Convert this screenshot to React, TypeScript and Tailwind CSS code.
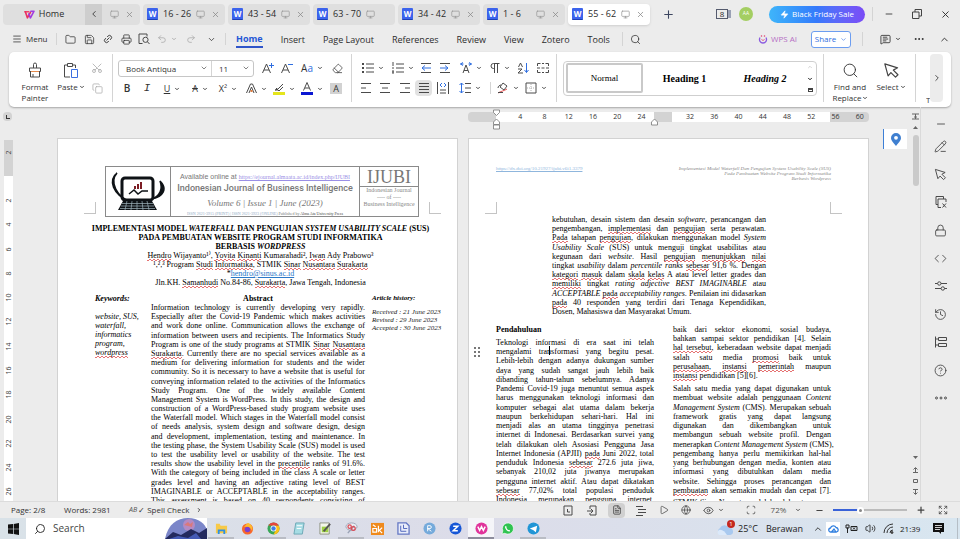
import React from "react";
import {
  ChevronDown, ChevronLeft, ChevronRight, ChevronUp, CircleHelp, Code, Copy, Ellipsis,
  Eraser, Eye, Folder, Globe, History, Lock, Menu, MessageSquareText, Minus, Monitor, PencilLine,
  Play, Plus, Printer, Redo2, Save, Scissors, Search, Undo2, X, Zap,
  Scan, Volume2, FileText, CopyX, Link2, Expand,
} from "lucide-react";

type Kids = { children?: React.ReactNode };

/* Inline markup: *italic* and ~flagged by the spell checker~ */
function Rich({ text }: { text: string }) {
  return (
    <>
      {text.split(/(\*[^*]+\*|~[^~]+~)/).map((part, i) => {
        if (part.startsWith("*")) return <em key={i}>{part.slice(1, -1)}</em>;
        if (part.startsWith("~"))
          return (
            <span
              key={i}
              className="bg-[linear-gradient(90deg,#e57373_50%,transparent_50%),linear-gradient(90deg,transparent_50%,#e57373_50%)] bg-[length:4px_1px] bg-[position:0_100%,0_calc(100%_-_1px)] bg-repeat-x pb-px"
            >
              {part.slice(1, -1)}
            </span>
          );
        return <React.Fragment key={i}>{part}</React.Fragment>;
      })}
    </>
  );
}

function Lines({ lines, className, ragged }: { lines: string[]; className: string; ragged?: boolean }) {
  return (
    <div className={"flex flex-col justify-between " + className}>
      {lines.map((line, i) => (
        <p
          key={i}
          className={
            ragged && i === lines.length - 1
              ? "whitespace-nowrap"
              : "whitespace-nowrap text-justify [text-align-last:justify]"
          }
        >
          <Rich text={line} />
        </p>
      ))}
    </div>
  );
}

const abstractLines = [
  "Information technology is currently developing very rapidly.",
  "Especially after the Covid-19 Pandemic which makes activities",
  "and work done online. Communication allows the exchange of",
  "information between users and recipients. The Informatics Study",
  "Program is one of the study programs at STMIK ~Sinar~ ~Nusantara~",
  "~Surakarta~. Currently there are no special services available as a",
  "medium for delivering information for students and the wider",
  "community. So it is necessary to have a website that is useful for",
  "conveying information related to the activities of the Informatics",
  "Study Program. One of the widely available Content",
  "Management System is WordPress. In this study, the design and",
  "construction of a WordPress-based study program website uses",
  "the Waterfall model. Which stages in the Waterfall model consist",
  "of needs analysis, system design and software design, design",
  "and development, implementation, testing and maintenance. In",
  "the testing phase, the System Usability Scale (SUS) model is used",
  "to test the usability level or usability of the website. The test",
  "results show the usability level in the ~precentile~ ranks of 91.6%.",
  "With the category of being included in the class A scale or letter",
  "grades level and having an adjective rating level of BEST",
  "IMAGINABLE or ACCEPTABLE in the acceptability ranges.",
  "This assessment is based on 40 respondents consisting of",
];

const abstrakLines = [
  "kebutuhan, desain sistem dan desain *software*, perancangan dan",
  "pengembangan, ~implementasi~ dan ~pengujian~ serta perawatan.",
  "~Pada~ tahapan ~pengujian~, dilakukan menggunakan model *System*",
  "*Usability Scale* (SUS) untuk menguji tingkat usabilitas atau",
  "kegunaan dari *website*. Hasil ~pengujian~ ~menunjukkan~ ~nilai~",
  "tingkat *usability* dalam *percentile ranks* ~sebesar~ 91,6 %. Dengan",
  "~kategori~ ~masuk~ dalam ~skala~ ~kelas~ A atau level letter grades dan",
  "~memiliki~ tingkat *rating adjective BEST IMAGINABLE* atau",
  "*ACCEPTABLE* ~pada~ *acceptability ranges*. Penilaian ini didasarkan",
  "~pada~ 40 responden yang terdiri dari Tenaga Kependidikan,",
  "Dosen, Mahasiswa dan Masyarakat Umum.",
];

const introLines = [
  "Teknologi informasi di era saat ini telah",
  "mengalami transformasi yang begitu pesat.",
  "Lebih-lebih dengan adanya dukungan sumber",
  "daya yang sudah sangat jauh lebih baik",
  "dibanding tahun-tahun sebelumnya. Adanya",
  "Pandemi Covid-19 juga menuntut semua aspek",
  "harus menggunakan teknologi informasi dan",
  "komputer sebagai alat utama dalam bekerja",
  "maupun berkehidupan sehari-hari. Hal ini",
  "menjadi alas an utama tingginya penetrasi",
  "internet di Indonesai. Berdasarkan survei yang",
  "telah dilakukan oleh Asosiasi Pengguna Jasa",
  "Internet Indonesia (APJII) ~pada~ Juni 2022, total",
  "penduduk Indonesia ~sebesar~ 272.6 juta jiwa,",
  "sebanyak 210,02 juta jiwanya merupakan",
  "pengguna internet aktif. Atau dapat dikatakan",
  "~sebesar~ 77,02% total populasi penduduk",
  "Indonesia merupakan pengguna internet.",
];

const sectorLines = [
  "baik dari sektor ekonomi, sosial budaya,",
  "bahkan sampai sektor pendidikan [4]. Selain",
  "~hal tersebut~, keberadaan website dapat menjadi",
  "salah satu media ~promosi~ baik untuk",
  "~perusahaan~, ~instansi~ ~pemerintah~ maupun",
  "~instansi~ pendidikan [5][6].",
];

const cmsLines = [
  "Salah satu media yang dapat digunakan untuk",
  "membuat website adalah penggunaan *Content*",
  "*Management System* (CMS). Merupakan sebuah",
  "framework gratis yang dapat langsung",
  "digunakan dan dikembangkan untuk",
  "membangun sebuah website profil. Dengan",
  "menerapkan *Content Management System* (CMS),",
  "pengembang hanya perlu memikirkan hal-hal",
  "yang berhubungan dengan media, konten atau",
  "informasi yang dibutuhkan dalam media",
  "website. Sehingga proses perancangan dan",
  "~pembuatan~ akan semakin mudah dan cepat [7].",
];

/* ---------- small shared pieces ---------- */

const ic = { size: 11, strokeWidth: 1.6 };

function Divider({ className = "h-3" }: { className?: string }) {
  return <span className={"w-px shrink-0 bg-[#d4d4d4] " + className} />;
}

function Tool({ label, className, drop, children }: Kids & { label: string; className: string; drop?: boolean }) {
  return (
    <button aria-label={label} className={"flex h-4 shrink-0 items-center justify-center gap-1 " + className}>
      {children}
      {drop && <ChevronDown size={6} strokeWidth={3.5} className="shrink-0" />}
    </button>
  );
}

function Art({ w = 12, h = 12, children }: Kids & { w?: number; h?: number }) {
  return (
    <svg width={w} height={h} viewBox={`0 0 ${w} ${h}`} fill="none" stroke="#4a4a4a" strokeWidth="1" className="shrink-0">
      {children}
    </svg>
  );
}

function Pointer({ size }: { size: number }) {
  return (
    <svg width={size} height={size} viewBox="0 0 14 14" fill="none" stroke="#444" strokeWidth="1" strokeLinejoin="round">
      <path d="M1.500 1.500l2.700 10 2.300-2.800 3.800 3.800 2-2-3.800-3.800 3.500-1.900z" />
    </svg>
  );
}

function WpsMark({ size = 11 }: { size?: number }) {
  return (
    <svg width={size} height={size} viewBox="0 0 12 12" fill="none" strokeWidth="1.8" strokeLinejoin="round" strokeLinecap="round">
      <path d="M1 3h4.200" stroke="#f0436a" />
      <path d="M1.500 3l2.200 6.600L7 3.600" stroke="#e9315f" />
      <path d="M5.200 5.500l1.800 4.100L10.800 2.500H7.500" stroke="#a23be0" />
    </svg>
  );
}

function Tab({ title, active, noClose }: { title: string; active?: boolean; noClose?: boolean }) {
  return (
    <button
      className={
        "flex h-[21px] w-[82px] shrink-0 items-center rounded pl-1 pr-[5px] text-[9px] " +
        (active ? "bg-white shadow-sm" : "bg-[#dfdfdf]")
      }
    >
      <span className="flex h-3 w-[11px] items-center justify-center rounded-[1px] border-b border-[#1c3fb5] bg-[#3c63ec] text-[8px] font-bold leading-none text-white">
        W
      </span>
      <span className="ml-[5px] flex-1 text-left">{title}</span>
      <Monitor size={9} strokeWidth={2} className="text-[#999]" />
      <span className="ml-[6px] w-[9px]">{!noClose && <X size={9} strokeWidth={2} className="text-[#888]" />}</span>
    </button>
  );
}

/* ---------- window chrome ---------- */

function TabBar() {
  return (
    <header className="flex h-7 shrink-0 items-center gap-[3px] pl-[3px]">
      <div className="flex h-[21px] w-[137px] shrink-0 items-center overflow-hidden rounded bg-[#dfdfdf] text-[9px]">
        <button className="flex w-[82px] items-center justify-center gap-1">
          <WpsMark />
          Home
        </button>
        <button aria-label="Scroll tabs left" className="flex h-full w-[17px] items-center justify-center bg-[#cecece]">
          <ChevronLeft size={10} strokeWidth={2} />
        </button>
        <Monitor size={9} strokeWidth={2} className="ml-2 text-[#999]" />
        <X size={9} strokeWidth={2} className="ml-[6px] text-[#888]" />
      </div>
      <Tab title="16 - 26" />
      <Tab title="43 - 54" />
      <Tab title="63 - 70" noClose />
      <Tab title="34 - 42" />
      <Tab title="1 - 6" />
      <Tab title="55 - 62" active />
      <button aria-label="New tab" className="ml-[9px]">
        <Plus size={13} strokeWidth={2} className="text-[#3d4660]" />
      </button>
      <div className="flex flex-1 items-center justify-end">
        <span className="flex h-[10px] w-3 items-center justify-center border border-[#555b6e] text-[8px] leading-none">8</span>
        <span className="mr-2 h-2 w-[3px] bg-[#9aa1b5]" />
        <span className="mr-4 flex h-[14px] w-[14px] items-center justify-center rounded-full bg-[#a4ce62] text-[5px] text-white">AA</span>
        <button className="flex h-[17px] w-24 items-center justify-center gap-[3px] rounded-full bg-gradient-to-r from-[#3fb5fa] via-[#3579fb] to-[#7a4bf6] text-[8px] text-white">
          <Zap size={9} fill="white" strokeWidth={1} />
          Black Friday Sale
        </button>
        <Divider className="ml-[7px] h-[14px]" />
        <button aria-label="Minimize" className="ml-[11px]"><Minus size={10} strokeWidth={2} /></button>
        <button aria-label="Restore" className="ml-[18px]">
          <Art w={10} h={10}><path d="M.5 3h6.500v6.500H.5zM3 3V.5h6.500V7H7" stroke="#444" /></Art>
        </button>
        <button aria-label="Close" className="ml-[18px] mr-[9px]"><X size={11} strokeWidth={2} /></button>
      </div>
    </header>
  );
}

function MenuRow() {
  return (
    <nav className="flex h-[24px] shrink-0 items-center pb-[2px] pl-3 text-[9px]">
      <button className="flex w-11 items-center gap-1 text-[8px]"><Menu size={10} strokeWidth={1.8} />Menu</button>
      <Divider />
      <div className="ml-1 flex items-center">
        <Tool label="Open" className="w-[19px]"><Folder {...ic} /></Tool>
        <Tool label="Save" className="w-[18px]"><Save {...ic} /></Tool>
        <Tool label="Link" className="w-[19px]"><Link2 size={10} strokeWidth={2} className="-rotate-45" /></Tool>
        <Tool label="Print" className="w-[18px]"><Printer {...ic} /></Tool>
        <Tool label="Print preview" className="w-[18px]"><Art><path d="M4.500 10.500H1V1h8v2.500" /><circle cx="7.500" cy="6.800" r="2.600" /><path d="M9.500 8.800l2 2.200" /></Art></Tool>
        <Tool label="Undo" className="w-[28px] text-[#a8a8a8]" drop><Undo2 size={10} strokeWidth={1.8} /></Tool>
        <Tool label="Redo" className="w-[20px] text-[#a8a8a8]"><Redo2 size={10} strokeWidth={1.8} /></Tool>
        <Tool label="More" className="w-[20px]"><ChevronDown size={9} strokeWidth={2} /></Tool>
      </div>
      <Divider className="ml-1 h-3" />
      <div className="ml-[10px] flex items-center gap-[18px] pt-[2px]">
        <button className="border-b-2 border-[#2f55c9] font-bold text-[#2457d6]">Home</button>
        <button>Insert</button>
        <button>Page Layout</button>
        <button>References</button>
        <button>Review</button>
        <button>View</button>
        <button>Zotero</button>
        <button>Tools</button>
      </div>
      <Divider className="ml-[12px] h-[14px]" />
      <button aria-label="Search" className="ml-[7px]"><Search size={11} strokeWidth={1.6} /></button>
      <div className="flex flex-1 items-center justify-end">
        <button className="flex items-center gap-[3px] text-[8px] text-[#b66fc4]">
          <Art w={10} h={10}>
            <path d="M2 3.500C.5 6.500 2.500 9 5 9s4.500-2.500 3-5.500" stroke="#8b5be0" strokeWidth="1.300" />
            <path d="M3.500 5.500c.8 1 2.200 1 3 0" stroke="#e2557f" />
            <path d="M3 1.500l1 1M7 1.500l-1 1" stroke="#e2557f" strokeWidth="1.300" />
          </Art>
          WPS AI
        </button>
        <button className="ml-[14px] flex h-[17px] w-10 items-center justify-center gap-1 rounded-[3px] border border-[#6c9df0] bg-white text-[8px] text-[#2f6ee0]">
          Share<ChevronDown size={7} strokeWidth={2} />
        </button>
        <Divider className="mx-[11px] h-[14px]" />
        <Tool label="Comments" className="w-8" drop><MessageSquareText size={11} strokeWidth={1.8} /></Tool>
        <Tool label="More options" className="w-[26px]"><Ellipsis size={12} strokeWidth={2} /></Tool>
        <Tool label="Collapse ribbon" className="mr-1 w-6"><ChevronUp size={11} strokeWidth={2} /></Tool>
      </div>
    </nav>
  );
}

/* Stacked strokes used by the list and alignment tools */
function Bars({ rows }: { rows: [number, number][] }) {
  return (
    <Art>
      {rows.map(([a, b], i) => (
        <path key={i} d={`M${a} ${(i * 9) / (rows.length - 1) + 1.5}H${b}`} />
      ))}
    </Art>
  );
}

function Ribbon() {
  return (
    <section className="mx-[9px] flex h-[55px] shrink-0 items-center overflow-hidden rounded-[5px] bg-white pb-[3px] text-[8px] leading-[11px] text-[#333] shadow-[0_1px_2px_rgba(0,0,0,0.3)]">
      <button className="ml-[6px] flex h-[50px] w-10 flex-col items-center gap-[2px] pt-[9px]">
        <svg width="16" height="17" viewBox="0 0 16 17" fill="none" stroke="#4a4a4a" className="shrink-0">
          <path d="M6.500 6V2.500a1.500 1.500 0 013 0V6M2.500 6h11v3.500h-11zM3.500 9.500v5.500h9V9.500M6 12v3" />
          <path d="M4 9.500h8" stroke="#e58a4c" />
        </svg>
        <span>Format</span>
        <span className="-mt-[2px]">Painter</span>
      </button>
      <button className="flex h-[50px] w-8 flex-col items-center gap-[2px] pt-[9px]">
        <svg width="16" height="17" viewBox="0 0 16 17" fill="none" stroke="#4a4a4a" className="shrink-0">
          <path d="M7 15H1.500V3h3M9.500 3h3v3M4.500 1.500h5v3h-5z" />
          <path d="M8.500 7.500h6v8h-6z" stroke="#3b6fe0" />
        </svg>
        <span className="flex items-center gap-px">Paste<ChevronDown size={6} strokeWidth={3.5} /></span>
      </button>
      <div className="flex w-5 flex-col items-center gap-1 text-[#aaa]">
        <Tool label="Cut" className="w-4"><Scissors size={12} strokeWidth={1.6} className="-rotate-90" /></Tool>
        <Tool label="Copy" className="w-4"><Copy size={11} strokeWidth={1.6} /></Tool>
      </div>
      <Divider className="mx-[5px] h-[48px]" />
      <div className="flex flex-col gap-1">
        <div className="flex items-center">
          <div className="mr-1 flex h-[17px] w-[136px] items-center rounded-[3px] border border-[#c6c6c6]">
            <label className="relative flex w-[92px] items-center">
              <select aria-label="Font" className="w-full appearance-none bg-transparent pl-[7px]"><option>Book Antiqua</option></select>
              <ChevronDown size={8} strokeWidth={1.8} className="absolute right-[3px]" />
            </label>
            <Divider className="h-full" />
            <label className="relative flex flex-1 items-center">
              <select aria-label="Font size" className="w-full appearance-none bg-transparent pl-[7px]"><option>11</option></select>
              <ChevronDown size={8} strokeWidth={1.8} className="absolute right-[3px]" />
            </label>
          </div>
          <Tool label="Increase font size" className="w-[20px]"><Art><path d="M.5 11L4.500 2l4 9M2 8h5" /><path d="M9.500 1v5M7 3.500h5" stroke="#2f6ee0" /></Art></Tool>
          <Tool label="Decrease font size" className="w-[18px]"><Art><path d="M.5 11L4.500 2l4 9M2 8h5" /><path d="M7 2.500h5" stroke="#2f6ee0" /></Art></Tool>
          <Tool label="Change case" className="w-[32px] text-[10px]" drop><span>A<span className="text-[#2f6ee0]">a</span></span></Tool>
          <Tool label="Clear format" className="w-[18px]"><Eraser {...ic} /></Tool>
        </div>
        <div className="flex items-center">
          <Tool label="Bold" className="w-[18px] text-[10px] font-semibold">B</Tool>
          <Tool label="Italic" className="w-[22px] font-['Liberation_Mono',monospace] text-[11px] italic">I</Tool>
          <Tool label="Underline" className="w-7 text-[9px]" drop><span className="underline">U</span></Tool>
          <Tool label="Strikethrough" className="w-7 text-[9px]" drop><span className="line-through">A</span></Tool>
          <Tool label="Superscript" className="w-7 text-[9px]" drop>X²</Tool>
          <Tool label="Text effects" className="w-7" drop>
            <Art w={11} h={11}><path d="M.5 10L4.500 1h2l4 9M3 10l2.500-6L8 10" /><path d="M4.500 8h2" stroke="#e07b3c" strokeWidth="2" /></Art>
          </Tool>
          <Tool label="Highlight" className="w-7" drop>
            <Art w={12} h={13}><path d="M2 8l3-1 5-5M3 6l3 3 4-4M2 8h3" /><path d="M0 11.500h12" stroke="#e5e51c" strokeWidth="3" /></Art>
          </Tool>
          <Tool label="Font colour" className="w-7" drop>
            <Art w={12} h={13}><path d="M2.500 8.500L6 .5l3.500 8M4 6h4" /><path d="M0 11.500h12" stroke="#0b17d2" strokeWidth="3" /></Art>
          </Tool>
          <Tool label="Shading" className="ml-1 w-3 text-[9px]"><span className="bg-[#d2d2d2] px-[3px]">A</span></Tool>
        </div>
      </div>
      <Divider className="mx-[5px] h-[48px]" />
      <div className="flex flex-col gap-1">
        <div className="flex items-center">
          <Tool label="Bullets" className="w-[32px]" drop><Art><path d="M0 2h2M0 6h2M0 10h2" strokeWidth="2" /><path d="M4 2h8M4 6h8M4 10h8" /></Art></Tool>
          <Tool label="Numbering" className="w-[28px]" drop><Art><path d="M1 0v4M0 6h2M0 10h2M1 8v4" /><path d="M4 2h8M4 6h8M4 10h8" /></Art></Tool>
          <Tool label="Decrease indent" className="w-[18px]"><Art><path d="M1 1.500h10M1 10.500h10" /><path d="M11 6H2M5 3.500L2 6l3 2.500" stroke="#2f6ee0" /></Art></Tool>
          <Tool label="Increase indent" className="w-[20px]"><Art><path d="M1 1.500h10M1 10.500h10" /><path d="M1 6h8M6 3.500L9 6 6 8.500" stroke="#2f6ee0" /></Art></Tool>
          <Tool label="Character scaling" className="w-[32px]" drop><Art><path d="M3 11l3-8 3 8M4 8.500h4" /><path d="M3 .5L.5 2 3 3.500M9 .5L11.500 2 9 3.500M.5 2h3M8.500 2h3" stroke="#2f6ee0" /></Art></Tool>
          <Tool label="Paragraph marks" className="w-[26px]" drop><Art w={10}><path d="M4.500 11V1.500M7.500 11V1.500M9.500 1.500H3.500a2.500 2.500 0 000 5h1" /></Art></Tool>
          <Tool label="Sort" className="w-[20px]"><Art><path d="M1.500 5l2-4 2 4M1 7h4L1 11h5" /><path d="M9.500 1v9.500M7.500 8l2 2.500 2-2.500" stroke="#2f6ee0" /></Art></Tool>
          <Tool label="Tabs" className="w-[20px]"><Art><path d="M.5 4V1.500h3M5 1.500h2M8.500 1.500h3V4M.5 8v2.500h3M5 10.500h2M8.500 10.500h3V8M0 6h3M4.500 6h3M9 6h3" /></Art></Tool>
        </div>
        <div className="flex items-center">
          <Tool label="Align left" className="w-[18px]"><Bars rows={[[1, 11], [1, 6], [1, 11]]} /></Tool>
          <Tool label="Align centre" className="w-[20px]"><Bars rows={[[1, 11], [3, 9], [1, 11]]} /></Tool>
          <Tool label="Align right" className="w-[20px]"><Bars rows={[[1, 11], [6, 11], [1, 11]]} /></Tool>
          <Tool label="Justify" className="w-[17px] rounded-sm bg-[#e2e2e2]"><Bars rows={[[1, 11], [1, 11], [1, 11], [1, 11]]} /></Tool>
          <Tool label="Distribute" className="ml-px w-[20px]"><Art><path d="M.5 0v12M11.500 0v12M3 8h6M3 11h6" /><path d="M5 1L3 3l2 2M7 1l2 2-2 2" stroke="#2f6ee0" /></Art></Tool>
          <Tool label="Line spacing" className="w-[34px]" drop><Art><path d="M6 1.500h6M6 6h6M6 10.500h6" /><path d="M2.500 1v10M.5 3l2-2 2 2M.5 9l2 2 2-2" stroke="#2f6ee0" /></Art></Tool>
          <Divider className="mx-[3px] h-3" />
          <Tool label="Fill" className="w-[28px]" drop><Art><path d="M3 5l3-4 4 3-3 4zM1 6c0-2 2-3 3-3" /><path d="M1 11c3-2 6-2 9-4" stroke="#e05050" /><path d="M1 10.500h5" /></Art></Tool>
          <Tool label="Borders" className="w-[28px]" drop><Art><path d="M1 1h10v10H1z" /><path d="M6 2v8M2 6h8" stroke="#b0b0b0" strokeDasharray="1 1" /></Art></Tool>
        </div>
      </div>
      <Divider className="ml-[3px] mr-[6px] h-[48px]" />
      <div className="flex h-[35px] w-[254px] items-center rounded-[4px] border border-[#cfcfcf] pl-[2px] font-['Liberation_Serif',serif] text-[10px] text-black">
        <button className="h-[30px] w-[77px] rounded-[2px] border-2 border-[#c9c9c9] text-[9px]">Normal</button>
        <button className="w-[83px] font-bold">Heading 1</button>
        <button className="w-[78px] font-bold italic">Heading 2</button>
        <div className="flex h-full flex-1 flex-col items-center justify-around">
          <ChevronUp size={6} strokeWidth={2} className="text-[#aaa]" />
          <ChevronDown size={6} strokeWidth={3.5} />
          <span className="h-[4px] w-[5px] border border-t-2 border-[#444]" />
        </div>
      </div>
      <Divider className="ml-[6px] h-[48px]" />
      <button className="ml-[5px] flex h-[50px] w-[42px] flex-col items-center gap-[2px] pt-[9px]">
        <Search size={17} strokeWidth={1.3} className="shrink-0" />
        <span>Find and</span>
        <span className="-mt-[2px] flex items-center">Replace<ChevronDown size={6} strokeWidth={3.5} /></span>
      </button>
      <button className="flex h-[50px] w-[40px] flex-col items-center gap-[2px] pt-[9px]">
        <Pointer size={17} />
        <span className="flex items-center gap-px">Select<ChevronDown size={6} strokeWidth={3.5} /></span>
      </button>
      <Divider className="ml-1 h-[48px]" />
      <div className="flex h-full flex-1 items-center justify-end pr-2">
        <span className="mt-[43px] w-[4px] overflow-hidden">T</span>
        <button aria-label="Scroll ribbon" className="flex h-[48px] w-[13px] items-center justify-center rounded bg-[#ececec]">
          <ChevronRight size={10} strokeWidth={2} />
        </button>
      </div>
    </section>
  );
}

function Ruler() {
  const marks = ["4", "8", "12", "16", "20", "24", "", "32", "36", "40", "44", "48", "52", "56", "60"];
  return (
    <div className="flex h-[19px] shrink-0 items-center">
      <div className="flex w-[15px] justify-center">
        <span className="flex h-[9px] w-[9px] items-center justify-center rounded-sm bg-[#d3d3d3]">
          <span className="h-[4px] w-[4px] border-b border-l border-[#333]" />
        </span>
      </div>
      <div className="flex flex-1 justify-center">
        <div className="flex w-[812px] justify-end">
          <div className="relative flex h-[10px] w-[401px] items-center rounded-sm bg-[#d3d3d3]">
            <span className="ml-[28px] h-full w-[158px] bg-white" />
            <span className="ml-[18px] h-full w-[158px] bg-white" />
            <div className="absolute left-[40px] grid w-[364px] text-center text-[7px] leading-[10px] text-[#333] [grid-template-columns:repeat(15,1fr)]">
              {marks.map((m, i) => <span key={i}>{m}</span>)}
            </div>
            <svg className="absolute -top-[3px] left-[24px]" width="9" height="21" viewBox="0 0 9 21" fill="#fff" stroke="#777" strokeWidth="0.8">
              <path d="M1.500 1h6v2.500L4.500 6.500 1.500 3.500zM1.500 15.500h6v-2.500L4.500 10 1.500 13zM1.500 16h6v4h-6z" />
            </svg>
            <svg className="absolute top-[6px] left-[182px]" width="9" height="8" viewBox="0 0 9 8" fill="#fff" stroke="#777" strokeWidth="0.8">
              <path d="M1.500 7h6V4L4.500 1 1.500 4z" />
            </svg>
          </div>
        </div>
      </div>
      <div className="flex w-[9px] justify-center"><Art w={7} h={7}><path d="M0 1h7M0 6h7M3.500 1v5M2 4h3" stroke="#666" /></Art></div>
      <div className="h-full w-10 border-l border-[#dadada]" />
    </div>
  );
}

function VerticalRuler() {
  const marks = ["2", "", "2", "4", "6", "8", "10", "12", "14", "16", "18", "20", "22", "24", "26"];
  return (
    <div className="w-[15px] shrink-0 overflow-hidden pl-[4px] pt-[14px]">
      <div className="flex h-[364px] w-[9px] flex-col justify-between bg-gradient-to-b from-[#d3d3d3] from-10% to-white to-10% text-[7px] leading-none text-[#444]">
        {marks.map((m, i) => (
          <div key={i} className="flex h-[24px] items-center justify-center"><span className="-rotate-90">{m}</span></div>
        ))}
      </div>
    </div>
  );
}

/* ---------- document ---------- */

function Corner({ className }: { className: string }) {
  return <span className={"absolute h-3 w-3 border-[#c4c4c4] " + className} />;
}

function JournalHeader() {
  return (
    <div className="grid h-[51px] grid-cols-[65px_1fr_58px] border border-[#8a8a8a] text-center text-[#777]">
      <div className="flex items-center justify-center border-r border-[#8a8a8a]">
        <svg width="56" height="42" viewBox="0 0 56 42" fill="none" stroke="#0e1216">
          <rect x="12" y="7" width="31" height="22" rx="3" strokeWidth="3" />
          <path d="M13 30h29l5 9H8z" fill="#0e1216" stroke="none" />
          <path d="M12 32.500h31M11 35h33M10 37.500h35M17 30l-2 9M22 30l-1 9M27 30v9M32 30l1 9M37 30l2 9" stroke="#9fb4bd" strokeWidth=".7" />
          <path d="M19 23l5-4 4 4 4-3 6 0" strokeWidth="1.500" />
          <path d="M25 18v-3M28 18v-5M31 18V11" stroke="#7c1d24" strokeWidth="2" />
          <path d="M7 2C-2 8 2 24 21 31 7 26-1 11 7 2z" fill="#0e1216" strokeWidth="1.500" />
          <path d="M50 10c8 8 3 16-8 18 8-3 11-10 8-18z" fill="#0e1216" strokeWidth="1.500" />
        </svg>
      </div>
      <div className="flex flex-col items-center overflow-hidden whitespace-nowrap border-r border-[#8a8a8a] pt-[5px]">
        <p className="font-['Liberation_Sans',sans-serif] text-[7px] leading-[9px]">
          Available online at <a href="#journal" className="font-['Liberation_Serif',serif] text-[6px] text-[#9a8fe6] underline">https://ejournal.almaata.ac.id/index.php/IJUBI</a>
        </p>
        <p className="font-['Roboto',sans-serif] text-[9px] font-medium leading-[13px]">Indonesian Journal of Business Intelligence</p>
        <p className="font-['Liberation_Serif',serif] text-[9px] italic leading-4">Volume 6 | Issue 1 | June (2023)</p>
        <p className="text-[4px] leading-[6px]">
          <span className="text-[#8fa9c4] underline">ISSN 2621-3915 (PRINT) | ISSN 2621-3923 (ONLINE)</span> Published by <span className="text-[#444]">Alma Ata University Press</span>
        </p>
      </div>
      <div className="font-['Liberation_Serif',serif] text-[6px] leading-[7px]">
        <p className="h-[20px] border-b border-[#8a8a8a] text-[18px] leading-[20px]">IJUBI</p>
        <p className="whitespace-nowrap text-[#888]">Indonesian Journal<br />---- of ----<br />Business Intelligence</p>
      </div>
    </div>
  );
}

function PageOne() {
  return (
    <article className="relative w-[401px] shrink-0 overflow-hidden border border-b-0 border-[#d2d2d2] bg-white">
      <Corner className="left-[26px] top-[63px] border-b border-r" />
      <Corner className="right-[16px] top-[63px] border-b border-l" />
      <div className="pl-[47px] pr-[38px] pt-[27px]"><JournalHeader /></div>
      <div className="pl-[29px] pr-[23px] pt-[7px] text-center">
        <h1 className="whitespace-nowrap font-bold">
          IMPLEMENTASI MODEL <em>WATERFALL</em> DAN PENGUJIAN <em>SYSTEM USABILITY SCALE</em> (SUS)<br />
          PADA PEMBUATAN WEBSITE PROGRAM STUDI INFORMATIKA<br />
          BERBASIS <em>WORDPRESS</em>
        </h1>
        <div className="flex h-[35px] flex-col justify-between leading-[9px]">
          <p><Rich text="~Hendro~ Wijayanto¹⁾, ~Yovita~ ~Kinanti~ Kumarahadi², ~Iwan~ Ady Prabowo³" /></p>
          <p>¹,²,³ Program <Rich text="~Studi~ ~Informatika~, STMIK ~Sinar~ ~Nusantara~ ~Surakarta~" /></p>
          <p>*<a href="#mail" className="text-[#2a78c8] underline">hendro@sinus.ac.id</a></p>
          <p>Jln.KH. <Rich text="~Samanhudi~ No.84-86, ~Surakarta~, Jawa Tengah, Indonesia" /></p>
        </div>
      </div>
      <div className="flex pt-2">
        <aside className="ml-[37px] w-[56px] italic">
          <p className="font-bold">Keywords:</p>
          <p className="pt-[9px]">website, SUS,<br />waterfall,<br />informatics<br />program,<br /><Rich text="~wordpress~" /></p>
        </aside>
        <section className="w-[214px]">
          <h2 className="text-center font-bold">Abstract</h2>
          <Lines lines={abstractLines} className="h-[202px]" />
        </section>
        <aside className="ml-[7px] text-[7px] italic leading-[8px]">
          <p className="font-bold">Article history:</p>
          <p className="whitespace-nowrap pt-[6px] text-[#222]">Received : 21 June 2023<br />Revised : 29 June 2023<br />Accepted : 30 June 2023</p>
        </aside>
      </div>
    </article>
  );
}

function PageTwo() {
  return (
    <article className="relative w-[401px] shrink-0 border border-b-0 border-[#d2d2d2] bg-white">
      <Corner className="left-[16px] top-[63px] border-b border-r" />
      <Corner className="right-[26px] top-[63px] border-b border-l" />
      <div className="h-full overflow-hidden pl-[27px] pr-[37px] pt-[27px]">
        <header className="flex h-[49px] justify-between text-[5px] leading-[5px]">
          <a href="#doi" className="h-[6px] text-[#8fb6dd] underline">https://dx.doi.org/10.21927/ijubi.v6i1.3379</a>
          <p className="text-right italic text-[#888]">
            Implementasi Model Waterfall Dan Pengujian System Usability Scale (SUS)<br />Pada Pembuatan Website Program Studi Informatika<br />Berbasis Wordpress
          </p>
        </header>
        <div className="ml-[56px] w-[214px]"><Lines lines={abstrakLines} ragged className="h-[101px]" /></div>
        <div className="flex justify-between pt-[9px]">
          <section className="w-[158px]">
            <h2 className="mb-1 font-bold">Pendahuluan</h2>
            <Lines lines={introLines} className="h-[166px]" />
          </section>
          <section className="w-[158px]">
            <Lines lines={sectorLines} ragged className="h-[55px]" />
            <Lines lines={cmsLines} className="mt-1 h-[111px]" />
            <p className="mt-[3px] whitespace-nowrap">STMIK Sinar Nusantara adalah salah satu</p>
          </section>
        </div>
      </div>
      <span className="absolute left-[80px] top-[207px] h-[9px] w-px bg-black" />
      <span className="absolute left-[5px] top-[208px] grid grid-cols-2 gap-[2px]">
        {[0, 1, 2, 3, 4, 5].map((i) => <i key={i} className="h-[2px] w-[2px] bg-[#777]" />)}
      </span>
    </article>
  );
}

function SideTools() {
  const p = { size: 13, strokeWidth: 1.6 };
  const items: [string, React.ReactNode][] = [
    ["Edit", <PencilLine {...p} />], ["Select", <Pointer size={13} />],
    ["Clipboard", <Art><path d="M3 8.500H1V.5h7.500V3M6 11.500H3V3h8v3M7.500 7.500l3.500 4M11 7.500l-3.500 4" /></Art>],
    ["Protect", <Lock {...p} />], ["Code", <Code {...p} />],
    ["Settings", <Art><path d="M0 3.500h2.500M6 3.500h6M0 8.500h6M9.500 8.500H12" /><circle cx="4.300" cy="3.500" r="1.700" /><circle cx="7.800" cy="8.500" r="1.700" /></Art>],
    ["History", <History {...p} />],
    ["Outline", <Art><path d="M.5 .5v11M.5 3H3M.5 9H3M3.500 1.500h8v3h-8zM3.500 7.500h8v3h-8z" /></Art>],
    ["Help", <CircleHelp {...p} />],
    ["More", <Art h={4}><circle cx="1.500" cy="2" r="1" /><circle cx="6" cy="2" r="1" /><circle cx="10.500" cy="2" r="1" /></Art>],
  ];
  return (
    <aside className="relative flex w-10 shrink-0 flex-col items-center border-l border-[#dadada] pt-[6px]">
      <Minus size={12} strokeWidth={1.5} className="absolute -top-2" />
      {items.map(([label, icon]) => (
        <button key={label} aria-label={label} className="flex h-[28px] w-7 items-center justify-center text-[#444]">{icon}</button>
      ))}
    </aside>
  );
}

function Workspace() {
  return (
    <main className="flex min-h-0 flex-1">
      <VerticalRuler />
      <div className="relative flex flex-1 justify-center gap-[10px] overflow-hidden pt-[12px] font-['Liberation_Serif',serif] text-[8px] leading-[9px] text-black">
        <PageOne />
        <PageTwo />
        <div className="absolute right-1 top-[3px] flex h-5 w-6 items-center justify-center border-l border-[#3d7fd6] bg-white">
          <svg width="10" height="13" viewBox="0 0 10 13"><path d="M5 0a5 5 0 00-5 5c0 3 3 5 5 8 2-3 5-5 5-8a5 5 0 00-5-5z" fill="#3f7fd0" /><circle cx="5" cy="4.800" r="1.900" fill="#fff" /></svg>
        </div>
      </div>
      <div className="flex w-[9px] shrink-0 flex-col items-center">
        <svg width="5" height="9" viewBox="0 0 5 9"><path d="M0 3l2.500-3L5 3z" fill="#666" /></svg>
        <span className="h-[51px] w-[6px] rounded-full bg-[#cacaca]" />
        <span className="flex-1" />
        <svg width="5" height="47" viewBox="0 0 5 47" fill="none" stroke="#666">
          <path d="M0 2h5L2.500 5z" fill="#666" stroke="none" />
          <path d="M0 18.500h5M.5 15.500l2-2 2 2M2.500 14v4M.5 25.500h4v3h-4zM0 35.500h5M.5 38.500l2 2 2-2M2.500 36v4" />
        </svg>
      </div>
      <SideTools />
    </main>
  );
}

function StatusBar() {
  return (
    <footer className="flex h-[17px] shrink-0 items-center border-t border-[#dcdcdc] pl-[11px] text-[8px] text-[#333]">
      <span className="w-[53px]">Page: 2/8</span>
      <span className="w-[65px]">Words: 2981</span>
      <button className="flex items-center gap-[2px]">
        <span className="text-[7px] italic text-[#555]">AB</span><span className="-ml-px text-[8px]">✓</span>Spell Check
        <ChevronRight size={6} strokeWidth={3.5} className="ml-1" />
      </button>
      <div className="ml-auto flex items-center text-[#444]">
        <Tool label="Backup" className="w-[23px]"><Art w={10} h={11}><path d="M1 1h8v9H1zM4.500 4v3h2.500" /></Art></Tool>
        <Tool label="Sync" className="w-[25px]"><Art w={10} h={11}><path d="M3 4V1h6v9H3V8M0 6h6M4 4l2 2-2 2" /></Art></Tool>
        <Tool label="Page view" className="w-[25px]"><span className="flex h-[15px] w-[17px] items-center justify-center rounded-sm bg-[#d0d0d0]"><FileText size={10} strokeWidth={2} /></span></Tool>
        <Tool label="Outline view" className="w-[23px]"><Art w={10} h={11}><path d="M0 1.500h7M2 4.500h8M2 7.500h8M0 10.500h7" /></Art></Tool>
        <Tool label="Play" className="w-[23px]"><Play size={10} strokeWidth={1.8} /></Tool>
        <Tool label="Web view" className="w-[22px]"><Globe size={10} strokeWidth={1.8} /></Tool>
        <Tool label="Eye protection" className="w-[32px]" drop><Eye size={11} strokeWidth={1.8} /></Tool>
        <Tool label="Fit" className="ml-[10px] w-6"><Scan size={10} strokeWidth={1.8} /></Tool>
        <Tool label="Zoom level" className="ml-1 w-[38px] gap-[9px]" drop><span className="text-[#555]">72%</span></Tool>
        <Tool label="Zoom out" className="ml-[4px] w-[20px]"><Minus size={9} strokeWidth={3} /></Tool>
        <input
          type="range" aria-label="Zoom" min={0} max={100} defaultValue={36}
          className="mx-1 h-[2px] w-[74px] appearance-none bg-gradient-to-r from-[#3a62d8] from-37% to-[#bcbcbc] to-37% [&::-webkit-slider-thumb]:h-[7px] [&::-webkit-slider-thumb]:w-[7px] [&::-webkit-slider-thumb]:appearance-none [&::-webkit-slider-thumb]:rounded-full [&::-webkit-slider-thumb]:border-2 [&::-webkit-slider-thumb]:border-white [&::-webkit-slider-thumb]:bg-[#888]"
        />
        <Tool label="Zoom in" className="w-5"><Plus size={10} strokeWidth={3} /></Tool>
        <Tool label="Full screen" className="mr-[5px] w-6"><Expand size={10} strokeWidth={1.8} /></Tool>
      </div>
    </footer>
  );
}

/* ---------- taskbar ---------- */

function AppIcon({ name, active, running, children }: Kids & { name: string; active?: boolean; running?: boolean }) {
  return (
    <button
      aria-label={name}
      className={
        "flex h-full w-[26px] items-center justify-center border-b-2 pt-[2px] " +
        (active ? "border-[#8d8d9d] bg-white/70" : running ? "border-[#b9bcc4]" : "border-transparent")
      }
    >
      <svg width="13" height="13" viewBox="0 0 14 14" fill="none">{children}</svg>
    </button>
  );
}

function Taskbar() {
  return (
    <footer className="flex h-[21px] shrink-0 items-center bg-gradient-to-r from-[#d9e2e8] via-[#dcdce9] to-[#d8e6f0] text-[9px] text-[#222]">
      <button aria-label="Start" className="flex w-[26px] justify-center">
        <svg width="11" height="12" viewBox="0 0 11 12"><path d="M0 1.500L5 1v4.700H0zM5.700.9L11 0v5.700H5.700zM0 6.300h5V11L0 10.500zM5.700 6.300H11V12l-5.300-.9z" fill="#111" /></svg>
      </button>
      <label className="flex h-full w-[181px] items-center bg-white pl-2">
        <Search size={12} strokeWidth={1.8} className="-scale-x-100" />
        <input aria-label="Search" placeholder="Search" className="ml-[7px] w-[112px] bg-transparent text-[10px] outline-none placeholder:text-[#444]" />
        <svg width="42" height="21" viewBox="0 0 42 21">
          <path d="M0 21C3 6 12 0 23 0S40 6 42 12v9z" fill="#7b86c9" />
          <circle cx="24" cy="7" r="6" fill="#b48bc4" /><path d="M19 7l4-3 2 2 3-2-1 5z" fill="#d9797c" />
          <path d="M0 21l8-7 8 3 10-6 8 4 8-5v11z" fill="#232a5e" /><path d="M4 21l9-3 10 2 8-5 5 6z" fill="#455bb5" />
        </svg>
      </label>
      <div className="ml-px flex h-full">
        <AppIcon name="File Explorer" running><path d="M1 2h4l1 2h7v8H1z" fill="#f7c948" /><path d="M4 13V9h6v4" stroke="#2e8fe0" strokeWidth="2" /></AppIcon>
        <AppIcon name="Firefox"><circle cx="7" cy="7.500" r="6" fill="#f8672d" /><circle cx="7" cy="8" r="3" fill="#7b40cf" /><path d="M3 5c2-1 3-4 5-4 4 2 5 5 4 9-1-3-3-5-5-5z" fill="#fdbb2e" /></AppIcon>
        <AppIcon name="Chrome" running><circle cx="7" cy="7" r="6.500" fill="#3aa757" /><path d="M1.400 3.700A6.500 6.500 0 0112.700 4H7z" fill="#e8453c" /><path d="M12.700 4A6.500 6.500 0 017 13.500L9.800 8 7 4z" fill="#fbc116" /><circle cx="7" cy="7" r="3.200" fill="#fff" /><circle cx="7" cy="7" r="2.400" fill="#3f7ee8" /></AppIcon>
        <AppIcon name="Notepad"><path d="M3 1h9l-2 12H1z" fill="#a6dce4" stroke="#6aa6b4" /><path d="M4 4h6M4 7h5" stroke="#fff" /></AppIcon>
        <AppIcon name="Notepad++"><path d="M1 1h10v12H1z" fill="#f4f6ea" stroke="#8a8f7d" /><path d="M3 5h7v6H3z" fill="#9ed044" /><path d="M5 10l7-8" stroke="#555" strokeWidth="2" /></AppIcon>
        <AppIcon name="Snipping Tool" running><ellipse cx="7" cy="5" rx="6" ry="4" fill="#eceff5" stroke="#9aa3b5" /><path d="M3 12l7-8" stroke="#9aa3b5" strokeWidth="1.500" /><circle cx="9" cy="7" r="2" stroke="#d94b57" strokeWidth="1.400" /><circle cx="5" cy="5" r="1.800" stroke="#d94b57" strokeWidth="1.400" /></AppIcon>
        <AppIcon name="Citation tool"><path d="M0 1h14v13H0z" fill="#ef8a1d" /><path d="M2 7h4v4H2zM8 4v7M12 6L9 9l3 3M2 3l3 2" stroke="#fff" strokeWidth="1.300" /></AppIcon>
        <AppIcon name="Documents"><path d="M1 1h9l3 3v9H1z" fill="#e8ecfa" stroke="#6578c4" strokeWidth="1.400" /><path d="M4 4v6h6M7 3v4h4" stroke="#4c62bb" /></AppIcon>
        <AppIcon name="RStudio"><circle cx="7" cy="7" r="6.500" fill="#75aadb" /><path d="M5 10V4h2.500a1.500 1.500 0 010 3H5l4 3" stroke="#fff" /></AppIcon>
        <AppIcon name="Zoom"><circle cx="7" cy="7" r="6.500" fill="#1556d6" /><path d="M4.500 4.500h5l-5 5h5" stroke="#fff" strokeWidth="1.600" /></AppIcon>
        <AppIcon name="WPS Office" active><circle cx="7" cy="7" r="6.500" fill="#e0349b" /><path d="M3 5l2 4 2-4 2 4 2-4" stroke="#fff" strokeWidth="1.500" /></AppIcon>
        <AppIcon name="WhatsApp"><path d="M1 13l1-3.500A6 6 0 117 13a6 6 0 01-3-.8z" fill="#2fc351" stroke="#fff" strokeWidth=".7" /><path d="M5 4.500c0 3 2 5 4.500 5" stroke="#fff" strokeWidth="1.600" /></AppIcon>
        <AppIcon name="Telegram" running><circle cx="7" cy="7" r="6.500" fill="#2196d6" /><path d="M3 7l8-3-1.500 7-2.500-2z" fill="#fff" /></AppIcon>
      </div>
      <div className="ml-auto flex h-full items-center">
        <span className="relative mr-1">
          <svg width="18" height="17" viewBox="0 0 18 17"><path d="M4 15a4 4 0 010-7 5 5 0 019 0 3.500 3.500 0 011 7z" fill="#a9c9ef" /><path d="M3 15a3 3 0 010-5c3-1 6 2 8 5z" fill="#dbe9fa" /></svg>
          <span className="absolute -right-[1px] top-0 flex h-2 w-2 items-center justify-center rounded-full bg-[#c4281f] text-[6px] leading-none text-white">1</span>
        </span>
        <span className="w-[28px]">25°C</span>
        <span className="w-[44px]">Berawan</span>
        <Tool label="Hidden icons" className="w-4"><ChevronUp size={10} strokeWidth={2} /></Tool>
        <span className="flex h-[14px] w-[14px] items-center justify-center bg-white"><svg width="11" height="9" viewBox="0 0 11 9" fill="none" stroke="#2f7fe0" strokeWidth="1.300"><path d="M3 8a2 2 0 01-.5-4A3 3 0 018 3.500 2.300 2.300 0 018.500 8zM3.500 8L6 5l2 3" /></svg></span>
        <span className="flex w-[22px] justify-center"><Art w={13} h={9}><path d="M2.500 3.500V9M1 1h3v3H1zM6 2.500h6v4H6zM8 3.500l2 2M10 3.500l-2 2" stroke="#222" /></Art></span>
        <span className="flex w-4 justify-center"><Volume2 size={11} strokeWidth={1.8} /></span>
        <span className="flex w-5 justify-center"><Art w={11} h={11}><path d="M1 10A9 9 0 0110 1M4 10a6 6 0 016-6M7 10a3 3 0 013-3" stroke="#333" /><circle cx="9" cy="9.500" r="1" fill="#333" /></Art></span>
        <span className="w-[34px] pl-[2px] text-[8px]">21:39</span>
        <Tool label="Notifications" className="mr-[13px] w-3"><svg width="11" height="11" viewBox="0 0 11 11"><path d="M0 0h11v9H8v2L6 9H0z" fill="#111" /><path d="M2 2.500h7M2 4.500h7M2 6.500h5" stroke="#fff" strokeWidth=".8" /></svg></Tool>
        <span className="mr-[2px] h-full w-px bg-[#b5bec6]" />
      </div>
    </footer>
  );
}

export default function App() {
  return (
    <div className="flex h-screen w-full flex-col overflow-hidden bg-[#ececec] font-['Open_Sans','Noto_Sans',sans-serif] text-[#2b2b2b]">
      <TabBar />
      <MenuRow />
      <Ribbon />
      <Ruler />
      <Workspace />
      <StatusBar />
      <Taskbar />
    </div>
  );
}
